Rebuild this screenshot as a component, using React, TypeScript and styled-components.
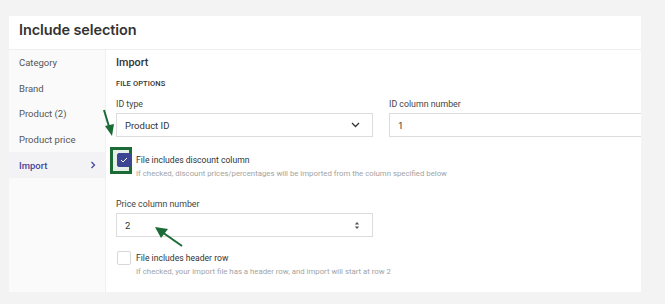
import React from "react";
import styled, { createGlobalStyle } from "styled-components";

const Global = createGlobalStyle`
  html, body { margin: 0; padding: 0; background: #f3f3f3; }
  body { font-family: Roboto, "Noto Sans", Arial, sans-serif; color: #333; }
  * { box-sizing: border-box; }
`;

const Page = styled.div`
  width: 665px;
  height: 304px;
  padding: 16px 24px 12px 9px;
  position: relative;
  overflow: hidden;
`;

const Card = styled.div`
  background: #fff;
  height: 276px;
  display: flex;
  flex-direction: column;
  overflow: hidden;
`;

const Header = styled.div`
  height: 34px;
  display: flex;
  align-items: flex-start;
  padding: 5px 10px 0;
  font-family: Inter, Roboto, sans-serif;
  font-size: 14.5px;
  line-height: 18px;
  font-weight: 600;
  color: #333;
  border-bottom: 1.5px solid #eeeeee;
  letter-spacing: -0.1px;
`;

const Body = styled.div`
  flex: 1;
  display: flex;
  min-height: 0;
`;

const Sidebar = styled.div`
  width: 97px;
  flex: none;
  background: #fafafa;
  border-right: 1px solid #f0f0f0;
  display: flex;
  flex-direction: column;
`;

const NavItem = styled.div<{ $active?: boolean }>`
  height: 25.6px;
  display: flex;
  align-items: center;
  justify-content: space-between;
  padding: 0 9px 0 10px;
  font-size: 9.5px;
  color: ${(p) => (p.$active ? "#4a4396" : "#555")};
  font-weight: ${(p) => (p.$active ? 500 : 400)};
  background: ${(p) => (p.$active ? "#f3f3f5" : "transparent")};
`;

const Main = styled.div`
  flex: 1;
  padding: 4px 0 0 10px;
  overflow: hidden;
  position: relative;
`;

const Title = styled.div`
  font-size: 10.8px;
  font-weight: 500;
  color: #333;
  height: 18px;
  line-height: 18px;
`;

const Section = styled.div`
  font-size: 7.5px;
  font-weight: 500;
  color: #333;
  margin-top: 7px;
  letter-spacing: 0.1px;
`;

const Grid = styled.div`
  display: grid;
  grid-template-columns: 257px 257px;
  column-gap: 16px;
  margin-top: 10px;
`;

const Field = styled.div<{ $top?: number }>`
  display: flex;
  flex-direction: column;
  margin-top: ${(p) => p.$top ?? 0}px;
`;

const Label = styled.div`
  font-size: 8.8px;
  color: #444;
  height: 12px;
  line-height: 12px;
  margin-bottom: 3px;
`;

const Box = styled.div`
  height: 24px;
  border: 1px solid #dcdcdc;
  display: flex;
  align-items: center;
  justify-content: space-between;
  padding: 0 12px 0 8px;
  font-size: 9.5px;
  color: #333;
  background: #fff;
`;

const CheckRow = styled.div<{ $top: number }>`
  display: flex;
  gap: 5px;
  margin-top: ${(p) => p.$top}px;
  position: relative;
`;

const Check = styled.div<{ $on?: boolean }>`
  position: relative;
  z-index: 1;
  width: 14px;
  height: 14px;
  flex: none;
  border-radius: 2px;
  margin-left: 1px;
  background: ${(p) => (p.$on ? "#3c4594" : "#fff")};
  border: 1px solid ${(p) => (p.$on ? "#3c4594" : "#d8d8d8")};
  display: flex;
  align-items: center;
  justify-content: center;
`;

const CheckText = styled.div`
  display: flex;
  flex-direction: column;
  padding-top: 1px;
`;

const CheckLabel = styled.div`
  font-size: 8.6px;
  color: #333;
  line-height: 12px;
`;

const CheckDesc = styled.div`
  font-size: 7.8px;
  color: #a3a3a3;
  line-height: 11px;
  margin-top: 2px;
`;

const Highlight = styled.div`
  position: absolute;
  left: -6px;
  top: -6px;
  width: 22px;
  height: 27px;
  border: 3px solid #1b6b36;
  background: #e6eee8;
`;

const Arrow = styled.svg`
  position: absolute;
  overflow: visible;
`;

const Narrow = styled.div`
  width: 257px;
`;

export default function App() {
  return (
    <>
      <Global />
      <Page>
        <Card>
          <Header>Include selection</Header>
          <Body>
            <Sidebar>
              <NavItem>Category</NavItem>
              <NavItem>Brand</NavItem>
              <NavItem>Product (2)</NavItem>
              <NavItem>Product price</NavItem>
              <NavItem $active>
                Import
                <svg width="6" height="8" viewBox="0 0 6 8">
                  <path d="M1.5 1 L4.5 4 L1.5 7" fill="none" stroke="#4a4396" strokeWidth="1.3" />
                </svg>
              </NavItem>
            </Sidebar>
            <Main>
              <Title>Import</Title>
              <Section>FILE OPTIONS</Section>
              <Grid>
                <Field>
                  <Label>ID type</Label>
                  <Box>
                    Product ID
                    <svg width="9" height="6" viewBox="0 0 9 6">
                      <path d="M1 1 L4.5 4.5 L8 1" fill="none" stroke="#333" strokeWidth="1.3" />
                    </svg>
                  </Box>
                </Field>
                <Field>
                  <Label>ID column number</Label>
                  <Box>1</Box>
                </Field>
              </Grid>
              <CheckRow $top={16}>
                <Highlight />
                <Check $on>
                  <svg width="8" height="6" viewBox="0 0 8 6">
                    <path d="M1 3 L3 5 L7 1" fill="none" stroke="#fff" strokeWidth="1" />
                  </svg>
                </Check>
                <CheckText>
                  <CheckLabel>File includes discount column</CheckLabel>
                  <CheckDesc>
                    If checked, discount prices/percentages will be imported from the column specified below
                  </CheckDesc>
                </CheckText>
              </CheckRow>
              <Narrow>
                <Field $top={19}>
                  <Label>Price column number</Label>
                  <Box>
                    2
                    <svg width="6" height="9" viewBox="0 0 6 9">
                      <path d="M0.8 3.5 L3 1 L5.2 3.5 Z M0.8 5.5 L3 8 L5.2 5.5 Z" fill="#555" />
                    </svg>
                  </Box>
                </Field>
              </Narrow>
              <CheckRow $top={14}>
                <Check />
                <CheckText>
                  <CheckLabel>File includes header row</CheckLabel>
                  <CheckDesc>
                    If checked, your import file has a header row, and import will start at row 2
                  </CheckDesc>
                </CheckText>
              </CheckRow>
            </Main>
          </Body>
        </Card>
        <Arrow width="20" height="30" style={{ left: 102, top: 108 }}>
          <path d="M2 2 L8 22" stroke="#1b6b36" strokeWidth="2" fill="none" />
          <path d="M3 18 L10 28 L12 16 Z" fill="#1b6b36" />
        </Arrow>
        <Arrow width="35" height="25" style={{ left: 152, top: 224 }}>
          <path d="M30 22 L10 8" stroke="#1b6b36" strokeWidth="2" fill="none" />
          <path d="M3 3 L16 5 L9 14 Z" fill="#1b6b36" />
        </Arrow>
      </Page>
    </>
  );
}
